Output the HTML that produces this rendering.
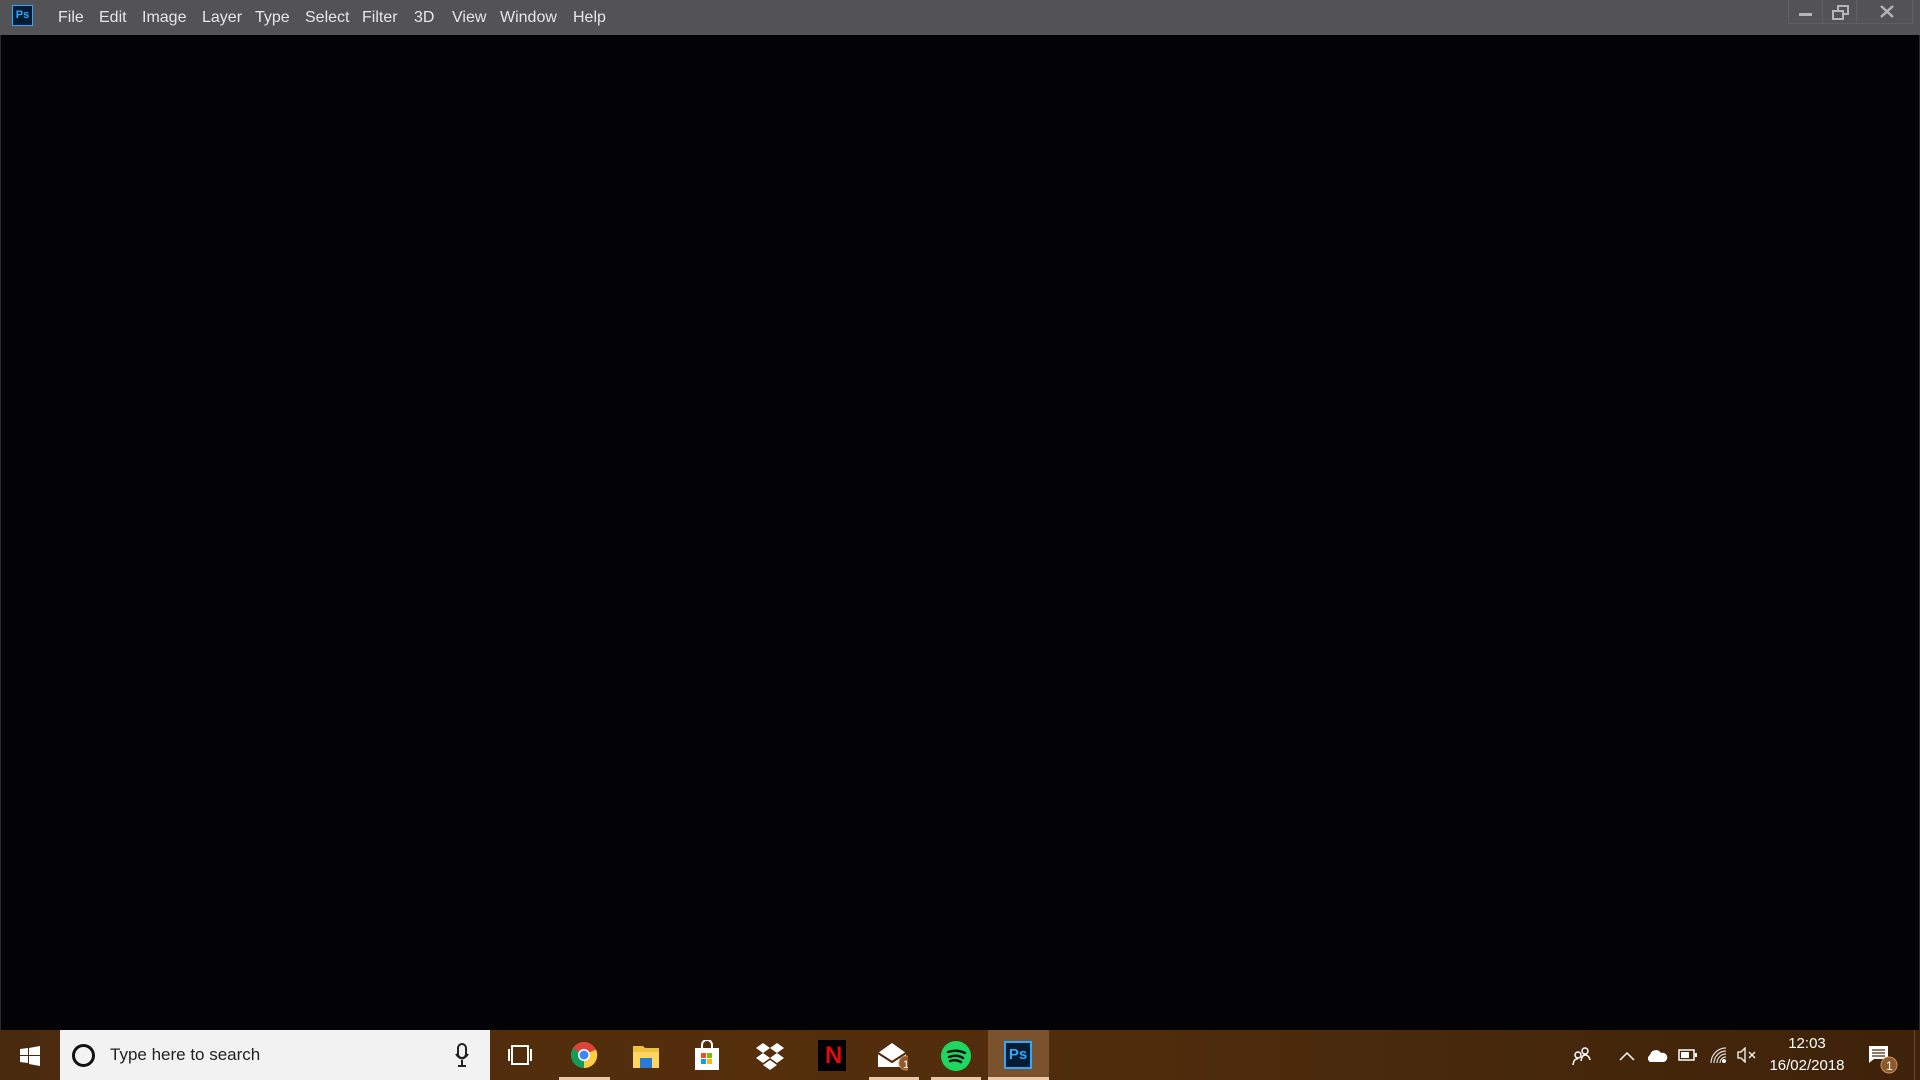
<!DOCTYPE html>
<html><head><meta charset="utf-8"><style>
*{margin:0;padding:0;box-sizing:border-box}
body{width:1920px;height:1080px;background:#030204;overflow:hidden;position:relative;font-family:"Liberation Sans",sans-serif}
#tb{position:absolute;left:0;top:0;width:1920px;height:35px;background:#535254}
#tb .m{position:absolute;top:9px;color:#e6e6e6;font-size:16px}
#ps{position:absolute;left:12px;top:5px;width:21px;height:21px;background:#001d34;border:1.5px solid #31a8ff;color:#31a8ff;font-size:11px;font-weight:bold;text-align:center;line-height:18px}
.wc{position:absolute;top:0;height:24px;border-right:1px solid #605f61;border-bottom:1px solid #605f61}
#task{position:absolute;left:0;top:1030px;width:1920px;height:50px;background:linear-gradient(90deg,#4a2a0e,#552f0c 40%,#4a2a0c 70%,#3e2209)}
#search{position:absolute;left:60px;top:0;width:430px;height:50px;background:#f3f2f3}
.ul{position:absolute;bottom:0;height:3px;background:#e9c9a9}
.tray{position:absolute;color:#fff}
</style></head><body>
<div id="tb">
<div id="ps">Ps</div>
<span class="m" style="left:58px">File</span>
<span class="m" style="left:99px">Edit</span>
<span class="m" style="left:142px">Image</span>
<span class="m" style="left:202px">Layer</span>
<span class="m" style="left:255px">Type</span>
<span class="m" style="left:305px">Select</span>
<span class="m" style="left:362px">Filter</span>
<span class="m" style="left:414px">3D</span>
<span class="m" style="left:452px">View</span>
<span class="m" style="left:500px">Window</span>
<span class="m" style="left:573px">Help</span>
<div class="wc" style="left:1788px;width:35px;border-left:1px solid #605f61"></div>
<div class="wc" style="left:1823px;width:34px"></div>
<div class="wc" style="left:1857px;width:56px"></div>
<div style="position:absolute;left:1799px;top:13px;width:13px;height:3px;background:#b5b5b5"></div>
<svg style="position:absolute;left:1832px;top:5px" width="18" height="16"><rect x="6" y="1" width="10" height="8" fill="none" stroke="#b5b5b5" stroke-width="2"/><rect x="1" y="6" width="10" height="8" fill="#535254" stroke="#b5b5b5" stroke-width="2"/></svg>
<svg style="position:absolute;left:1880px;top:5px" width="14" height="13"><path d="M1 1L13 12M13 1L1 12" stroke="#b5b5b5" stroke-width="2.5"/></svg>
</div>
<div style="position:absolute;left:0;top:35px;width:1px;height:995px;background:#2a2a2a"></div>
<div style="position:absolute;right:0;top:35px;width:1px;height:995px;background:#2a2a2a"></div>

<div id="task">
<svg style="position:absolute;left:20px;top:16px" width="20" height="20"><path d="M0 3L8 2V9H0ZM9 2L20 0V9H9ZM0 10H8V17L0 16ZM9 10H20V20L9 18Z" fill="#fff"/></svg>
<div id="search">
<div style="position:absolute;left:12px;top:14px;width:23px;height:23px;border:3px solid #111;border-radius:50%"></div>
<span style="position:absolute;left:50px;top:15px;font-size:17px;color:#222">Type here to search</span>
<svg style="position:absolute;left:395px;top:13px" width="14" height="24"><rect x="3" y="1" width="8" height="14" rx="4" fill="none" stroke="#222" stroke-width="2"/><path d="M1 11Q7 20 13 11M7 17V22M3 23H11" fill="none" stroke="#222" stroke-width="2"/></svg>
</div>
<svg style="position:absolute;left:508px;top:15px" width="24" height="20"><rect x="4" y="1" width="16" height="18" fill="none" stroke="#fff" stroke-width="2"/><path d="M1 4V16M23 4V16" stroke="#fff" stroke-width="2"/></svg>
<svg style="position:absolute;left:570px;top:11px" width="28" height="28" viewBox="0 0 28 28"><circle cx="14" cy="14" r="13" fill="#db4437"/><path d="M14 14L2.7 20.5A13 13 0 0 1 2.7 7.5L14 14" fill="#0f9d58"/><path d="M14 14L2.7 20.5A13 13 0 0 0 14 27Z" fill="#0f9d58"/><path d="M14 14L14 27A13 13 0 0 0 26 8.5Z" fill="#ffcd40"/><circle cx="14" cy="14" r="6" fill="#fff"/><circle cx="14" cy="14" r="4.5" fill="#4285f4"/></svg>
<div class="ul" style="left:559px;width:51px"></div>
<svg style="position:absolute;left:633px;top:14px" width="26" height="24"><path d="M0 2H10L12 4H26V24H0Z" fill="#f0c040"/><rect x="0" y="8" width="26" height="16" fill="#ffd760"/><rect x="7" y="14" width="12" height="10" fill="#2a7bd4"/></svg>
<svg style="position:absolute;left:694px;top:10px" width="26" height="30"><path d="M8 8V5A5 5 0 0 1 18 5V8" fill="none" stroke="#fff" stroke-width="2"/><rect x="1" y="8" width="24" height="22" fill="#fff"/><rect x="7" y="13" width="5" height="5" fill="#f25022"/><rect x="13" y="13" width="5" height="5" fill="#7fba00"/><rect x="7" y="19" width="5" height="5" fill="#00a4ef"/><rect x="13" y="19" width="5" height="5" fill="#ffb900"/></svg>
<svg style="position:absolute;left:755px;top:12px" width="30" height="28"><path d="M8 1L15 6 8 11 1 6ZM22 1L29 6 22 11 15 6ZM8 11L15 16 8 21 1 16ZM22 11L29 16 22 21 15 16ZM15 18L22 23 15 28 8 23Z" fill="#fff"/></svg>
<div style="position:absolute;left:818px;top:10px;width:28px;height:31px;background:#000"><span style="position:absolute;left:7px;top:2px;color:#e50914;font-weight:bold;font-size:24px">N</span></div>
<svg style="position:absolute;left:878px;top:13px" width="30" height="30"><path d="M0 10L14 0 28 10V24H0Z" fill="#fff"/><path d="M0 10L14 19 28 10" fill="none" stroke="#4a2a0e" stroke-width="2"/><circle cx="28" cy="20" r="7" fill="#8c5a2c" stroke="#c89060" stroke-width="1"/><text x="25" y="25" fill="#fff" font-size="11" font-family="Liberation Sans">1</text></svg>
<div class="ul" style="left:869px;width:50px"></div>
<svg style="position:absolute;left:941px;top:11px" width="30" height="30"><circle cx="15" cy="15" r="15" fill="#1ed760"/><path d="M7 11Q16 8 24 12M8 16Q16 13 22 17M9 20Q15 18 20 21" fill="none" stroke="#111" stroke-width="2.5" stroke-linecap="round"/></svg>
<div class="ul" style="left:931px;width:50px"></div>
<div style="position:absolute;left:988px;top:0;width:61px;height:50px;background:#7a532e"></div>
<div style="position:absolute;left:1004px;top:11px;width:28px;height:28px;background:#001d34;border:2px solid #31a8ff;color:#31a8ff;font-weight:bold;font-size:15px;text-align:center;line-height:24px">Ps</div>
<div class="ul" style="left:988px;width:61px"></div>

<svg style="position:absolute;left:1572px;top:16px" width="20" height="20"><circle cx="6" cy="9" r="3" fill="none" stroke="#fff" stroke-width="1.5"/><circle cx="13" cy="5" r="3" fill="none" stroke="#fff" stroke-width="1.5"/><path d="M1 19Q2 12 6 13M9 15Q10 9 13 9 17 9 18 14" fill="none" stroke="#fff" stroke-width="1.5"/></svg>
<svg style="position:absolute;left:1619px;top:21px" width="16" height="10"><path d="M1 9L8 2 15 9" fill="none" stroke="#fff" stroke-width="1.5"/></svg>
<svg style="position:absolute;left:1646px;top:18px" width="22" height="14"><path d="M4 14A4 4 0 0 1 4 7 6 6 0 0 1 15 5 4.5 4.5 0 0 1 18 14Z" fill="#fff"/></svg>
<svg style="position:absolute;left:1678px;top:19px" width="20" height="12"><rect x="1" y="1" width="15" height="10" fill="none" stroke="#fff" stroke-width="1.5"/><rect x="3" y="3" width="8" height="6" fill="#fff"/><rect x="17" y="4" width="2" height="4" fill="#fff"/></svg>
<svg style="position:absolute;left:1709px;top:16px" width="18" height="18"><path d="M2 17A15 15 0 0 1 17 2M5 17A12 12 0 0 1 17 5M8 17A9 9 0 0 1 17 8M11 17A6 6 0 0 1 17 11" fill="none" stroke="#ddd" stroke-width="1.2"/><circle cx="15" cy="15" r="2" fill="#fff"/></svg>
<svg style="position:absolute;left:1737px;top:17px" width="20" height="16"><path d="M1 5H4L8 1V15L4 11H1Z" fill="none" stroke="#fff" stroke-width="1.3"/><path d="M12 5L18 11M18 5L12 11" stroke="#fff" stroke-width="1.3"/></svg>
<div class="tray" style="left:1772px;top:5px;width:70px;text-align:center;font-size:15px">12:03</div>
<div class="tray" style="left:1764px;top:27px;width:86px;text-align:center;font-size:15px">16/02/2018</div>
<svg style="position:absolute;left:1868px;top:15px" width="34" height="32"><path d="M1 1H20V14H6L1 18Z" fill="#fff"/><path d="M4 5H17M4 8H17M4 11H17" stroke="#4a2a0e" stroke-width="1.2"/><circle cx="21" cy="20" r="8" fill="#8c5a2c" stroke="#c89060"/><text x="18" y="25" fill="#fff" font-size="12" font-family="Liberation Sans">1</text></svg>
<div style="position:absolute;left:1914px;top:0;width:1px;height:50px;background:#6b4a2a"></div>
</div>
</body></html>
